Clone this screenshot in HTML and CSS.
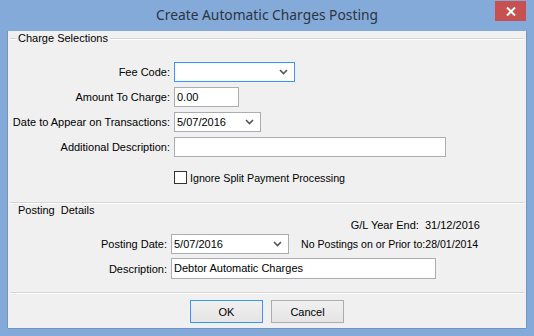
FILE: index.html
```html
<!DOCTYPE html>
<html>
<head>
<meta charset="utf-8">
<link rel="stylesheet" href="styles.css">
</head>
<body>
<div class="window">
  <div class="titlebar">
    <div></div>
    <div class="title">Create Automatic Charges Posting</div>
    <div class="close-wrap">
      <div class="close">
        <svg width="10" height="9" viewBox="0 0 10 9"><path d="M1 0.5 L9 8.5 M9 0.5 L1 8.5" stroke="#fff" stroke-width="2"/></svg>
      </div>
    </div>
  </div>
  <div class="client">
    <div class="group-head">
      <span class="seg"></span><span class="legend">Charge Selections</span><span class="rule"></span>
    </div>
    <div class="form form1">
      <label>Fee Code:</label>
      <div class="select focus w-fee"><span></span><svg class="chev" width="9" height="6" viewBox="0 0 9 6"><path d="M1 1 L4.5 4.5 L8 1" fill="none" stroke="#555" stroke-width="1.6"/></svg></div>
      <label>Amount To Charge:</label>
      <div class="input w-amt">0.00</div>
      <label>Date to Appear on Transactions:</label>
      <div class="select w-date"><span>5/07/2016</span><svg class="chev" width="9" height="6" viewBox="0 0 9 6"><path d="M1 1 L4.5 4.5 L8 1" fill="none" stroke="#555" stroke-width="1.6"/></svg></div>
      <label>Additional Description:</label>
      <div class="input w-add"></div>
    </div>
    <div class="check-row">
      <span class="box"></span><span>Ignore Split Payment Processing</span>
    </div>
    <div class="sep"></div>
    <div class="legend2">Posting&nbsp; Details</div>
    <div class="gl">G/L Year End:&nbsp; 31/12/2016</div>
    <div class="form form2">
      <label>Posting Date:</label>
      <div class="inline">
        <div class="select w-post"><span>5/07/2016</span><svg class="chev" width="9" height="6" viewBox="0 0 9 6"><path d="M1 1 L4.5 4.5 L8 1" fill="none" stroke="#555" stroke-width="1.6"/></svg></div>
        <span class="note">No Postings on or Prior to:28/01/2014</span>
      </div>
      <label>Description:</label>
      <div class="input w-desc tall">Debtor Automatic Charges</div>
    </div>
    <div class="sep bottom"></div>
    <div class="buttons">
      <button class="btn default">OK</button>
      <button class="btn">Cancel</button>
    </div>
  </div>
</div>
</body>
</html>
```
FILE: styles.css
```css
html, body {
  margin: 0;
  padding: 0;
}
body {
  width: 534px;
  height: 336px;
  overflow: hidden;
  background: #84aad9;
  font-family: "Liberation Sans", Arial, sans-serif;
  font-size: 11px;
  color: #000;
}
.window {
  width: 534px;
  height: 336px;
  display: flex;
  flex-direction: column;
}
.titlebar {
  height: 31px;
  display: grid;
  grid-template-columns: 1fr auto 1fr;
}
.title {
  font-family: "Noto Sans", "Open Sans", sans-serif;
  font-size: 13.8px;
  color: #2d3440;
  line-height: 30px;
}
.close-wrap {
  display: flex;
  justify-content: flex-end;
  align-items: flex-start;
  padding-right: 8px;
}
.close {
  margin-top: 1px;
  width: 31px;
  height: 20px;
  background: #c75050;
  display: flex;
  align-items: center;
  justify-content: center;
}
.client {
  margin: 0 8px 8px 8px;
  flex: 1;
  background: #f0f0f0;
  box-shadow: -1px 0 0 #6f95c7, 1px 0 0 #6f95c7, 0 1px 0 #6f95c7;
  padding-top: 1px;
  display: flex;
  flex-direction: column;
}
.group-head {
  display: flex;
  align-items: center;
  height: 13px;
  line-height: 13px;
  padding: 0 2px 0 2px;
}
.group-head .seg {
  width: 7px;
  height: 1px;
  background: #d5d5d5;
  border-bottom: 1px solid #fff;
}
.group-head .legend {
  padding: 0 2px 0 1px;
}
.group-head .rule {
  flex: 1;
  height: 1px;
  background: #d5d5d5;
  border-bottom: 1px solid #fff;
}
.form {
  display: grid;
  column-gap: 4px;
  align-items: center;
}
.form1 {
  margin-top: 17px;
  grid-template-columns: 162px 1fr;
  row-gap: 5px;
  grid-auto-rows: 20px;
}
.form label {
  text-align: right;
}
.input, .select {
  box-sizing: border-box;
  height: 20px;
  background: #fff;
  border: 1px solid #abadb3;
  line-height: 18px;
  padding-left: 2px;
  font-size: 11px;
}
.input.tall {
  height: 21px;
}
.select {
  display: flex;
  justify-content: space-between;
  align-items: center;
  padding-right: 6px;
}
.select.focus {
  border-color: #3399ff;
}
.w-fee { width: 121px; }
.w-amt { width: 65px; }
.w-date { width: 87px; }
.w-add { width: 272px; }
.w-post { width: 118px; }
.w-desc { width: 265px; }
.check-row {
  margin-top: 14px;
  margin-left: 166px;
  display: flex;
  align-items: center;
  height: 13px;
  gap: 3px;
  font-size: 10.7px;
}
.box {
  box-sizing: border-box;
  width: 13px;
  height: 13px;
  background: #fff;
  border: 1px solid #333;
}
.sep {
  margin: 18px 2px 0 2px;
  height: 1px;
  background: #d5d5d5;
  border-bottom: 1px solid #fff;
}
.legend2 {
  margin-left: 10px;
  line-height: 13px;
  height: 13px;
}
.gl {
  margin-top: 2px;
  text-align: right;
  padding-right: 46px;
  line-height: 13px;
}
.form2 {
  margin-top: 2px;
  grid-template-columns: 159px 1fr;
  row-gap: 4px;
}
.inline {
  display: flex;
  align-items: center;
  gap: 12px;
}
.note {
  font-size: 10.6px;
}
.sep.bottom {
  margin-top: 13px;
}
.buttons {
  margin-top: 6px;
  display: flex;
  justify-content: center;
  gap: 8px;
}
.btn {
  box-sizing: border-box;
  width: 73px;
  height: 23px;
  border: 1px solid #acacac;
  background: linear-gradient(#f0f0f0, #e5e5e5);
  font-family: "Liberation Sans", Arial, sans-serif;
  font-size: 11px;
  color: #000;
  padding: 0;
}
.btn.default {
  border-color: #3399ff;
}
```
